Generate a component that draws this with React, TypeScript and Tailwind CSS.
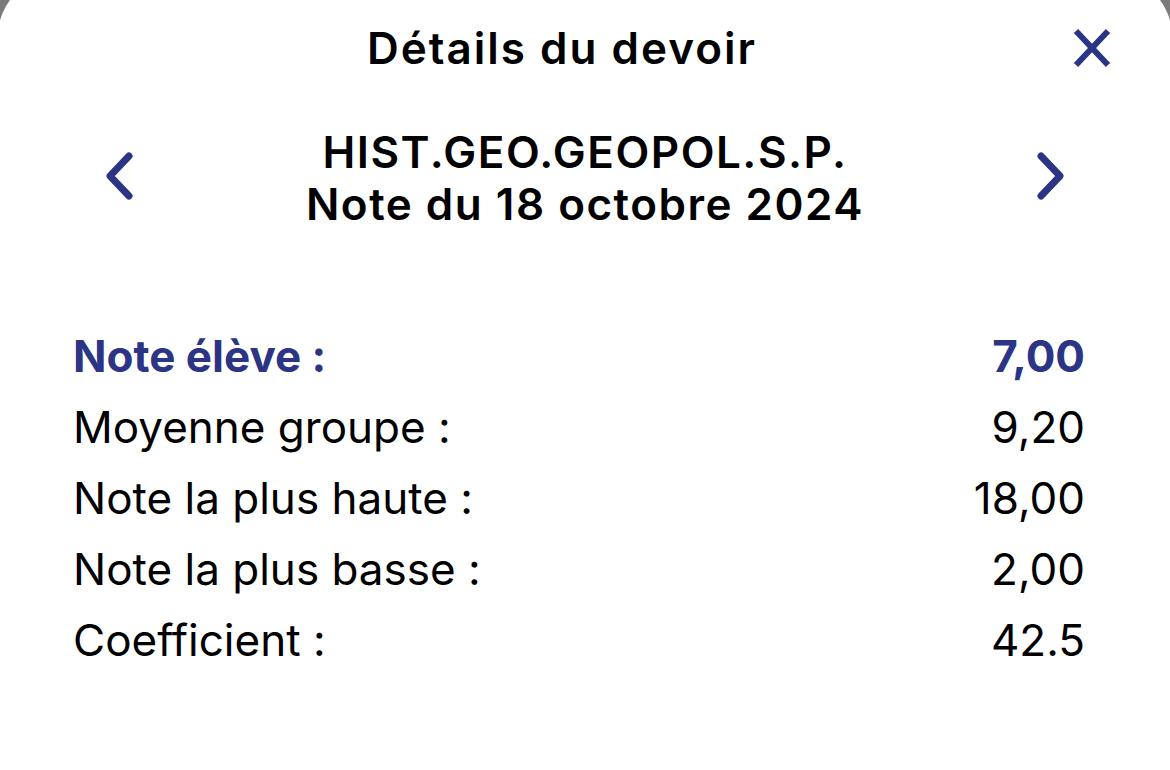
import React from 'react';

const NAVY = 'text-[#2c3585]';

const rows = [
  { label: 'Moyenne groupe :', value: '9,20' },
  { label: 'Note la plus haute :', value: '18,00' },
  { label: 'Note la plus basse :', value: '2,00' },
  { label: 'Coefficient :', value: '42.5' },
];

const Chevron = ({ dir }: { dir: 'left' | 'right' }) => (
  <svg width="40" height="60" viewBox="0 0 40 60" fill="none" className={NAVY}>
    <path
      d={dir === 'left' ? 'M27 8 L8 28 L27 48' : 'M13 8 L32 28 L13 48'}
      stroke="currentColor"
      strokeWidth="7"
      strokeLinecap="round"
      strokeLinejoin="round"
    />
  </svg>
);

const CloseIcon = () => (
  <svg width="40" height="40" viewBox="0 0 40 40" fill="none" className={NAVY}>
    <path d="M4 3 L36 37 M36 3 L4 37" stroke="currentColor" strokeWidth="6" />
  </svg>
);

export default function App() {
  return (
    <div className="w-[1170px] h-[770px] overflow-hidden bg-[#7b7b7b]">
      <div
        className="-mx-[2px] -mt-[24px] h-[794px] rounded-t-[60px] bg-white px-[2px] pt-[24px] text-black"
        style={{ fontFamily: 'Inter, "Open Sans", sans-serif' }}
      >
        {/* header */}
        <div className="grid h-[96px] grid-cols-[1fr_auto_1fr] items-center">
          <div />
          <h1 className="mr-[46px] text-[44px] font-semibold leading-none tracking-[2px]">Détails du devoir</h1>
          <div className="flex justify-end pr-[58px]">
            <button className="flex items-center justify-center">
              <CloseIcon />
            </button>
          </div>
        </div>

        {/* subject switcher */}
        <div className="mt-[30px] flex items-center justify-between px-[102px]">
          <button>
            <Chevron dir="left" />
          </button>
          <div className="text-center text-[44px] font-semibold leading-[52px] tracking-[1.5px]">
            <div>HIST.GEO.GEOPOL.S.P.</div>
            <div>Note du 18 octobre 2024</div>
          </div>
          <button>
            <Chevron dir="right" />
          </button>
        </div>

        {/* grade details */}
        <div className="mt-[90px] flex flex-col pl-[73px] pr-[85px] text-[44px]">
          <div className={`flex h-[71px] items-center justify-between font-bold ${NAVY}`}>
            <span>Note élève :</span>
            <span>7,00</span>
          </div>
          {rows.map((r) => (
            <div key={r.label} className="flex h-[71px] items-center justify-between">
              <span>{r.label}</span>
              <span>{r.value}</span>
            </div>
          ))}
        </div>
      </div>
    </div>
  );
}
